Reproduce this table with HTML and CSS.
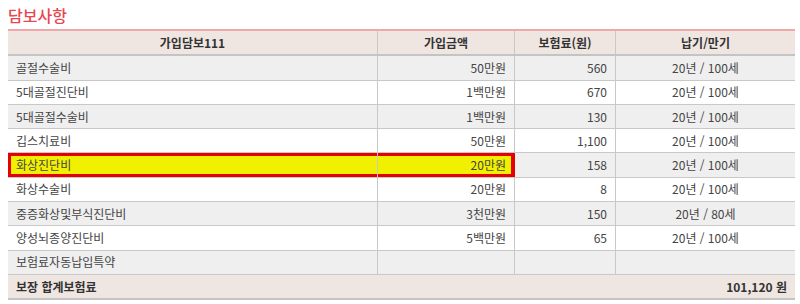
FILE: index.html
```html
<!DOCTYPE html>
<html lang="ko">
<head>
<meta charset="utf-8">
<link rel="stylesheet" href="styles.css">
</head>
<body>
<h2 class="title">담보사항</h2>
<table class="cov">
  <thead>
    <tr><th class="c1">가입담보111</th><th class="c2">가입금액</th><th class="c3">보험료(원)</th><th class="c4">납기/만기</th></tr>
  </thead>
  <tbody>
    <tr class="g"><td>골절수술비</td><td class="r">50만원</td><td class="r">560</td><td class="m">20년 / 100세</td></tr>
    <tr><td>5대골절진단비</td><td class="r">1백만원</td><td class="r">670</td><td class="m">20년 / 100세</td></tr>
    <tr class="g"><td>5대골절수술비</td><td class="r">1백만원</td><td class="r">130</td><td class="m">20년 / 100세</td></tr>
    <tr><td>깁스치료비</td><td class="r">50만원</td><td class="r">1,100</td><td class="m">20년 / 100세</td></tr>
    <tr class="g"><td class="hl1">화상진단비</td><td class="r hl2">20만원</td><td class="r">158</td><td class="m">20년 / 100세</td></tr>
    <tr><td>화상수술비</td><td class="r">20만원</td><td class="r">8</td><td class="m">20년 / 100세</td></tr>
    <tr class="g"><td>중증화상및부식진단비</td><td class="r">3천만원</td><td class="r">150</td><td class="m">20년 / 80세</td></tr>
    <tr><td>양성뇌종양진단비</td><td class="r">5백만원</td><td class="r">65</td><td class="m">20년 / 100세</td></tr>
    <tr class="g"><td>보험료자동납입특약</td><td></td><td></td><td></td></tr>
  </tbody>
  <tfoot>
    <tr><td class="tl">보장 합계보험료</td><td colspan="3" class="tr">101,120 원</td></tr>
  </tfoot>
</table>
</body>
</html>
```
FILE: styles.css
```css
html, body { margin: 0; padding: 0; background: #fff; }
body {
  padding: 6px 5px 0 8px;
  font-family: "Noto Sans CJK KR", "Noto Sans", sans-serif;
  color: #444;
}
.title {
  margin: 0 0 4px 0;
  font-size: 16px;
  line-height: 19px;
  font-weight: 500;
  color: #e8474f;
}
.cov {
  width: 787px;
  border-collapse: collapse;
  border-top: 2px solid #f1a7a7;
  font-size: 12px;
}
.cov th, .cov td {
  height: 23.3px;
  padding: 0 8px;
  border: 1px solid #c8c8c8;
  border-top: 0;
  line-height: 22px;
}
.cov tr > :first-child { border-left: 0; }
.cov tr > :last-child { border-right: 0; }
.cov th {
  background: #efe6e1;
  font-weight: 700;
  color: #333;
  border-bottom: 2px solid #c4c4c4;
}
.c1 { width: 353px; }
.c2 { width: 120px; }
.c3 { width: 84px; }
.cov tbody tr { background: #fff; }
.cov tbody tr.g { background: #efefef; }
.r { text-align: right; }
.m { text-align: center; }
.cov td.hl1, .cov td.hl2 { background: #f0f000; }
.cov td.hl1 {
  box-shadow: inset 3px 0 0 #e60000, inset 0 3px 0 #e60000, inset 0 -3px 0 #e60000;
}
.cov td.hl2 {
  box-shadow: inset -3px 0 0 #e60000, inset 0 3px 0 #e60000, inset 0 -3px 0 #e60000;
  border-right-color: #e60000;
}
.cov tfoot td {
  background: #efe6e1;
  font-weight: 700;
  color: #333;
  border-left: 0;
  border-right: 0;
  border-bottom: 2px solid #c4c4c4;
}
.tr { text-align: right; }
```
